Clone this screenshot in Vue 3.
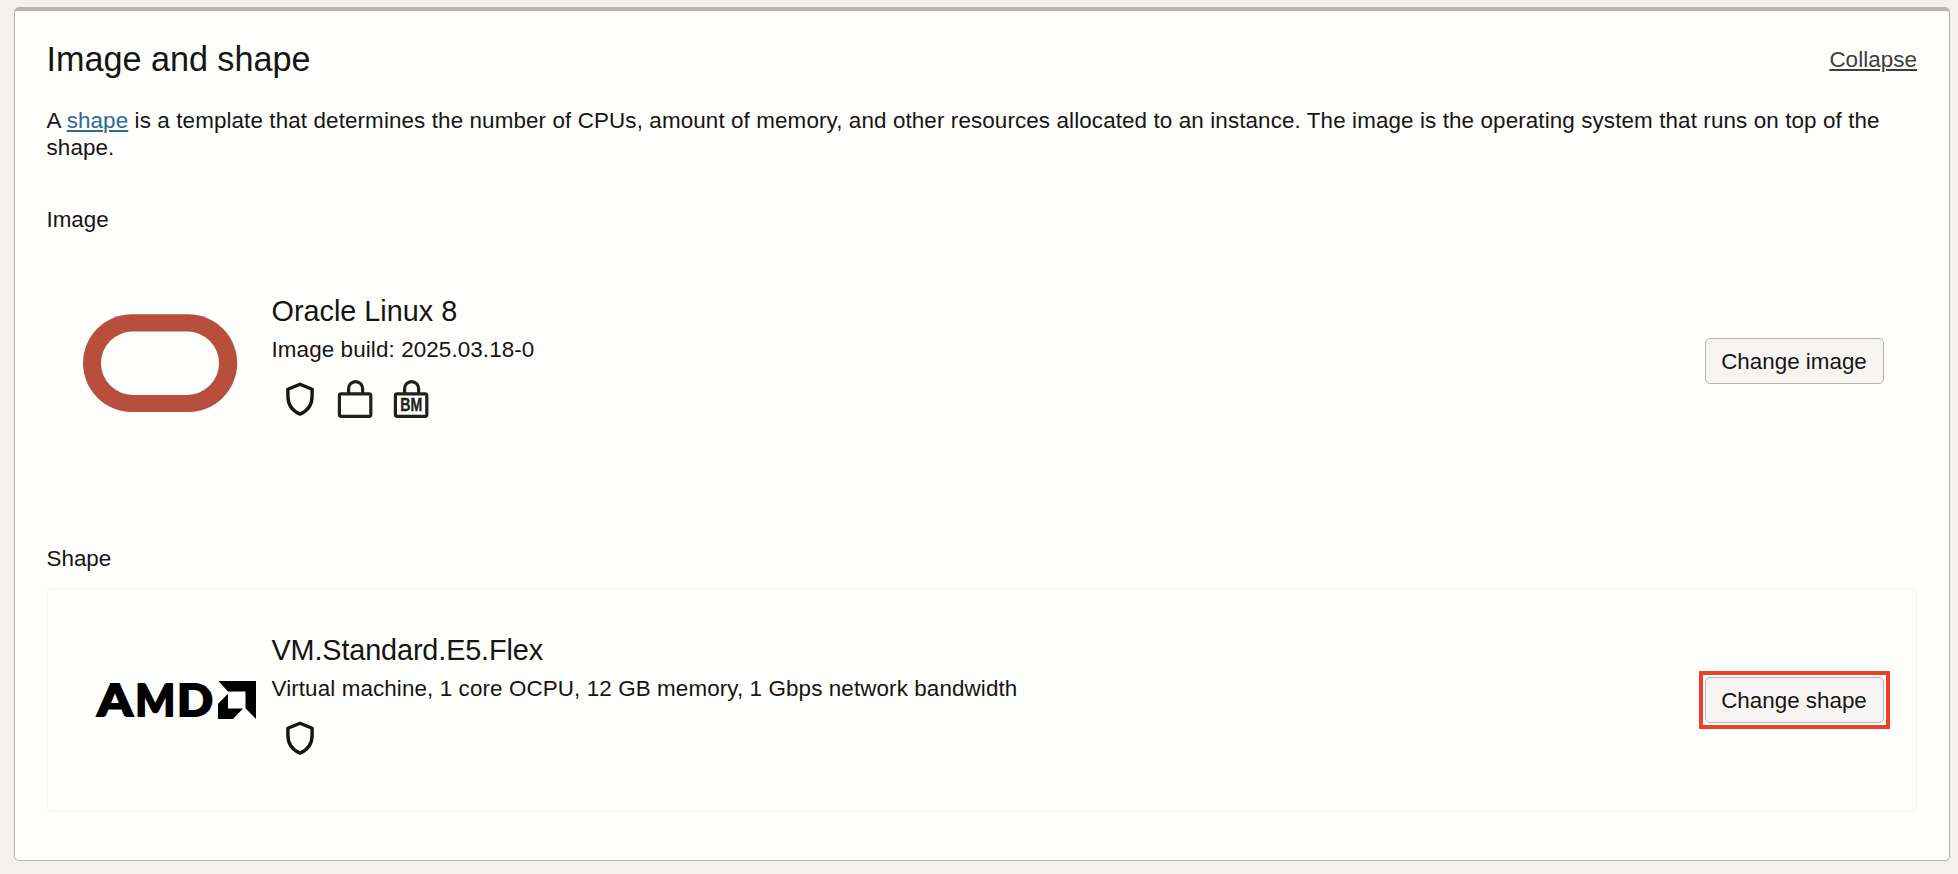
<script setup>
const description =
  'is a template that determines the number of CPUs, amount of memory, and other resources allocated to an instance. The image is the operating system that runs on top of the shape.'

const shieldPath =
  'M14 3.2 L26.1 8.2 V15 C26.1 23.5 21.5 30 14 33.1 C6.5 30 1.9 23.5 1.9 15 V8.2 Z'

const sections = [
  {
    id: 'image',
    label: 'Image',
    name: 'Oracle Linux 8',
    detail: 'Image build: 2025.03.18-0',
    icons: ['shield', 'lock', 'bm'],
    action: 'Change image',
  },
  {
    id: 'shape',
    label: 'Shape',
    name: 'VM.Standard.E5.Flex',
    detail: 'Virtual machine, 1 core OCPU, 12 GB memory, 1 Gbps network bandwidth',
    icons: ['shield'],
    action: 'Change shape',
  },
]
</script>

<template>
  <main class="page">
    <section class="card">
      <header class="head">
        <h1 class="title">Image and shape</h1>
        <a class="collapse">Collapse</a>
      </header>
      <p class="intro">A <a class="link">shape</a> {{ description }}</p>

      <div v-for="s in sections" :key="s.id" class="section" :class="s.id">
        <h2 class="label">{{ s.label }}</h2>
        <div class="panel">
          <div class="logo">
            <svg v-if="s.id === 'image'" width="154" height="98" viewBox="0 0 154 98">
              <rect width="154.2" height="97.8" y="0.2" rx="48.9" fill="#b84f3d" />
              <rect x="18" y="17.5" width="118" height="63.4" rx="31.7" fill="#fefefc" />
            </svg>
            <svg v-else width="160" height="38" viewBox="0 0 160 38">
              <text class="amd" y="34.6" x="1.2" textLength="35.4" lengthAdjust="spacingAndGlyphs">A</text>
              <text class="amd" y="34.6" x="39.2" textLength="40" lengthAdjust="spacingAndGlyphs">M</text>
              <text class="amd" y="34.6" x="81" textLength="36" lengthAdjust="spacingAndGlyphs">D</text>
              <path d="M122.5 0 H160 V38 L149.5 27.3 V10.4 H132 Z M122 22.7 L132 12.7 V27.4 H147 L137 38 H122 Z" />
            </svg>
          </div>
          <div class="info">
            <h3 class="name">{{ s.name }}</h3>
            <p class="detail">{{ s.detail }}</p>
            <div class="icons">
              <template v-for="icon in s.icons" :key="icon">
                <svg v-if="icon === 'shield'" class="shield" width="28" height="38" viewBox="0 -1 28 38">
                  <path :d="shieldPath" />
                </svg>
                <svg v-else width="34" height="38" viewBox="0 0 34 38">
                  <rect x="1.4" y="13.8" width="31.4" height="22.5" rx="1.8" />
                  <path d="M10.6 13.5 V8.6 A7 7 0 0 1 24.6 8.6 V13.5" />
                  <text v-if="icon === 'bm'" class="bm" x="6.2" y="31.2" textLength="22" lengthAdjust="spacingAndGlyphs">BM</text>
                </svg>
              </template>
            </div>
          </div>
          <div class="action">
            <div class="frame">
              <button class="btn">{{ s.action }}</button>
            </div>
          </div>
        </div>
      </div>
    </section>
  </main>
</template>

<style>
html,
body {
  margin: 0;
  background: #f3f1f0;
}
</style>

<style scoped>
.page {
  box-sizing: border-box;
  height: 874px;
  padding: 7px 8px 13px 14px;
  overflow: hidden;
  font-family: "Liberation Sans", Arial, Helvetica, sans-serif;
  font-size: 22.4px;
  line-height: 27px;
  color: #161513;
}
.card {
  box-sizing: border-box;
  height: 854px;
  padding: 27px 32px 48px;
  border: 1px solid #b5b2b0;
  border-top: 4px solid #bbb4af;
  border-radius: 5px;
  background: #fefefc;
}
.head {
  display: flex;
  justify-content: space-between;
  align-items: center;
  height: 42px;
  margin-bottom: 27px;
}
h1, h2, h3, p {
  margin: 0 0 0 -0.5px;
  font-weight: 400;
}
.title {
  font-size: 34.2px;
  line-height: 42px;
  letter-spacing: -0.02px;
}
.collapse {
  color: #3f3e3c;
  letter-spacing: 0.06px;
  text-decoration: underline;
  text-decoration-thickness: 2px;
  text-underline-offset: 2px;
}
.link {
  color: #2f6a90;
  text-decoration: underline;
  text-decoration-thickness: 2px;
  text-underline-offset: 2px;
}
.intro {
  height: 54px;
  letter-spacing: 0.115px;
}
.image {
  margin-top: 45px;
}
.shape {
  margin-top: 72px;
}
.label {
  font-size: 22.4px;
  line-height: 27px;
  margin-bottom: 16px;
}
.panel {
  box-sizing: border-box;
  display: flex;
  height: 224px;
  border: 1px solid transparent;
  border-radius: 5px;
}
.shape .panel {
  border-color: #f5f4f3;
}
.logo {
  box-sizing: border-box;
  display: flex;
  align-items: center;
  justify-content: center;
  width: 224px;
  padding-top: 4px;
}
.shape .logo {
  padding: 0 0 0 32px;
}
.logo svg,
.icons svg {
  display: block;
  overflow: visible;
}
.amd {
  font-family: Lato, sans-serif;
  font-weight: 900;
  font-size: 43.6px;
  stroke: #000;
  stroke-width: 1.8px;
}
.info {
  flex: 1;
  padding-top: 43px;
}
.name {
  font-size: 28.8px;
  line-height: 36px;
  margin-bottom: 7px;
}
.shape .name {
  letter-spacing: -0.12px;
}
.detail {
  letter-spacing: 0.11px;
}
.icons {
  display: flex;
  gap: 22px;
  margin: 17px 0 0 14px;
}
.icons rect,
.icons path {
  fill: none;
  stroke: #222120;
  stroke-width: 3.2;
}
.icons .shield {
  margin-right: 2px;
}
.icons .shield path {
  stroke: #161513;
  stroke-width: 3.4;
  stroke-linejoin: round;
}
.bm {
  font-family: "Liberation Sans", Arial, sans-serif;
  font-weight: 700;
  font-size: 17.5px;
  fill: #222120;
  stroke: #222120;
  stroke-width: 0.3px;
}
.action {
  display: flex;
  align-items: center;
  padding-right: 26px;
}
.frame {
  display: flex;
  padding: 2px;
  border: 4px solid transparent;
}
.shape .frame {
  border-color: #ec4127;
}
.btn {
  box-sizing: border-box;
  width: 179px;
  height: 46px;
  padding: 0 1px 0 0;
  border: 1px solid #b9b3b0;
  border-radius: 5px;
  background: #f7f5f4;
  font: inherit;
  color: inherit;
}
</style>
